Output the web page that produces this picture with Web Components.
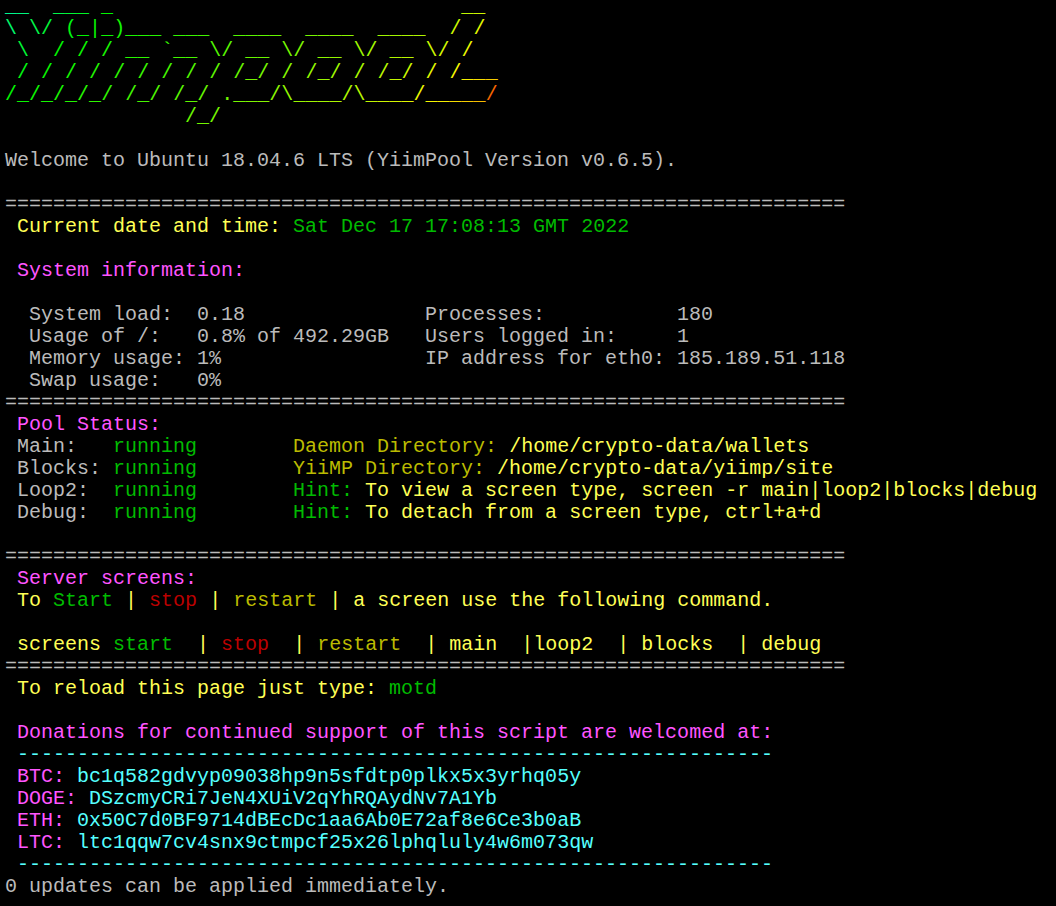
<!DOCTYPE html>
<html><head><meta charset="utf-8"><style>html,body{margin:0;background:#000;overflow:hidden}</style></head><body>
<motd-screen>
<motd-banner></motd-banner>
<motd-line></motd-line>
<motd-line>Welcome to Ubuntu 18.04.6 LTS (YiimPool Version v0.6.5).</motd-line>
<motd-line></motd-line>
<motd-rule></motd-rule>
<motd-line> <t-x t="y">Current date and time:</t-x> <t-x t="g">Sat Dec 17 17:08:13 GMT 2022</t-x></motd-line>
<motd-line></motd-line>
<motd-line> <t-x t="m">System information:</t-x></motd-line>
<motd-line></motd-line>
<motd-line>  System load:  0.18               Processes:           180</motd-line>
<motd-line>  Usage of /:   0.8% of 492.29GB   Users logged in:     1</motd-line>
<motd-line>  Memory usage: 1%                 IP address for eth0: 185.189.51.118</motd-line>
<motd-line>  Swap usage:   0%</motd-line>
<motd-rule></motd-rule>
<motd-line> <t-x t="m">Pool Status:</t-x></motd-line>
<motd-line> Main:   <t-x t="g">running</t-x>        <t-x t="b">Daemon Directory:</t-x> <t-x t="y">/home/crypto-data/wallets</t-x></motd-line>
<motd-line> Blocks: <t-x t="g">running</t-x>        <t-x t="b">YiiMP Directory:</t-x> <t-x t="y">/home/crypto-data/yiimp/site</t-x></motd-line>
<motd-line> Loop2:  <t-x t="g">running</t-x>        <t-x t="g">Hint:</t-x> <t-x t="y">To view a screen type, screen -r main|loop2|blocks|debug</t-x></motd-line>
<motd-line> Debug:  <t-x t="g">running</t-x>        <t-x t="g">Hint:</t-x> <t-x t="y">To detach from a screen type, ctrl+a+d</t-x></motd-line>
<motd-line></motd-line>
<motd-rule></motd-rule>
<motd-line> <t-x t="m">Server screens:</t-x></motd-line>
<motd-line> <t-x t="y">To</t-x> <t-x t="g">Start</t-x> <t-x t="y">|</t-x> <t-x t="r">stop</t-x> <t-x t="y">|</t-x> <t-x t="b">restart</t-x> <t-x t="y">| a screen use the following command.</t-x></motd-line>
<motd-line></motd-line>
<motd-line> <t-x t="y">screens</t-x> <t-x t="g">start</t-x>  <t-x t="y">|</t-x> <t-x t="r">stop</t-x>  <t-x t="y">|</t-x> <t-x t="b">restart</t-x>  <t-x t="y">| main  |loop2  | blocks  | debug</t-x></motd-line>
<motd-rule></motd-rule>
<motd-line> <t-x t="y">To reload this page just type:</t-x> <t-x t="g">motd</t-x></motd-line>
<motd-line></motd-line>
<motd-line> <t-x t="m">Donations for continued support of this script are welcomed at:</t-x></motd-line>
<motd-rule kind="dash"></motd-rule>
<motd-line> <t-x t="m">BTC:</t-x> <t-x t="c">bc1q582gdvyp09038hp9n5sfdtp0plkx5x3yrhq05y</t-x></motd-line>
<motd-line> <t-x t="m">DOGE:</t-x> <t-x t="c">DSzcmyCRi7JeN4XUiV2qYhRQAydNv7A1Yb</t-x></motd-line>
<motd-line> <t-x t="m">ETH:</t-x> <t-x t="c">0x50C7d0BF9714dBEcDc1aa6Ab0E72af8e6Ce3b0aB</t-x></motd-line>
<motd-line> <t-x t="m">LTC:</t-x> <t-x t="c">ltc1qqw7cv4snx9ctmpcf25x26lphqluly4w6m073qw</t-x></motd-line>
<motd-rule kind="dash"></motd-rule>
<motd-line>0 updates can be applied immediately.</motd-line>
</motd-screen>
<script>
const shadow=(el,html)=>{el.attachShadow({mode:'open'}).innerHTML=html};
customElements.define('motd-screen',class extends HTMLElement{constructor(){super();shadow(this,`<style>
:host{display:block;height:910px;box-sizing:border-box;margin-top:-4px;padding-left:5px;overflow:hidden;background:#000;color:#bbb;font:20px/22px "Liberation Mono","Courier New",monospace}
</style><slot></slot>`)}});
customElements.define('motd-line',class extends HTMLElement{constructor(){super();shadow(this,`<style>:host{display:block;height:22px;white-space:pre}</style><slot></slot>`)}});
customElements.define('t-x',class extends HTMLElement{constructor(){super();shadow(this,`<style>
:host{display:inline}
:host([t=y]){color:#ffff55}:host([t=g]){color:#00bb00}:host([t=b]){color:#bbbb00}:host([t=r]){color:#bb0000}:host([t=m]){color:#ff55ff}:host([t=c]){color:#55ffff}
</style><slot></slot>`)}});
customElements.define('motd-rule',class extends HTMLElement{constructor(){super();
const dash=this.getAttribute('kind')==='dash';
shadow(this,`<style>:host{display:block;height:22px;white-space:pre;color:${dash?'#55ffff':'#bbb'}}</style>${dash?' '+'-'.repeat(63):'='.repeat(70)}`)}});
const ART=[
"__  ___ _                             __",
"\\ \\/ (_|_)___ ___  ____  ____  ____  / /",
" \\  / / / __ `__ \\/ __ \\/ __ \\/ __ \\/ /",
" / / / / / / / / / /_/ / /_/ / /_/ / /___",
"/_/_/_/_/ /_/ /_/ .___/\\____/\\____/_____/",
"               /_/"];
const STOPS=[[0,155],[8,120],[37,75],[44,58],[47,46],[48,25]];
const hue=x=>{for(let i=1;i<STOPS.length;i++){if(x<=STOPS[i][0]){const[a,h]=STOPS[i-1],[b,k]=STOPS[i];return h+(k-h)*(x-a)/(b-a)}}return 25};
customElements.define('motd-banner',class extends HTMLElement{constructor(){super();
const rows=ART.map((l,r)=>`<div>${[...l].map((ch,c)=>ch===' '?' ':`<span style="color:hsl(${hue(c+2*r).toFixed(0)} 100% 48%)">${ch}</span>`).join('')}</div>`).join('');
shadow(this,`<style>:host{display:block;white-space:pre}div{height:22px}</style>${rows}`)}});
</script>
</body></html>
